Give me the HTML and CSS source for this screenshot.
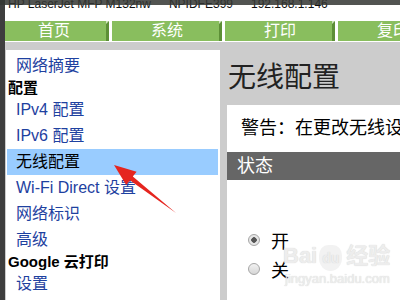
FILE: index.html
```html
<!DOCTYPE html>
<html lang="zh-CN">
<head>
<meta charset="utf-8">
<title>无线配置</title>
<link rel="stylesheet" href="styles.css">
</head>
<body>
<div class="page">
  <div class="frame-edge"></div>
  <div class="main">
    <div class="device">HP LaserJet MFP M132nw<span class="sep">NPIDFE399</span><span class="sep">192.168.1.146</span></div>
    <nav class="tabs">
      <a class="tab">首页</a>
      <a class="tab">系统</a>
      <a class="tab">打印</a>
      <a class="tab">复印</a>
    </nav>
    <div class="content">
      <aside class="sidenav">
        <a class="link">网络摘要</a>
        <div class="group">配置</div>
        <a class="link">IPv4 配置</a>
        <a class="link">IPv6 配置</a>
        <a class="link active">无线配置</a>
        <a class="link">Wi-Fi Direct 设置</a>
        <a class="link">网络标识</a>
        <a class="link">高级</a>
        <div class="group">Google 云打印</div>
        <a class="link">设置</a>
      </aside>
      <section class="panel">
        <h1 class="title">无线配置</h1>
        <div class="card">
          <p class="warn">警告：在更改无线设置之前，请确保已连接网络。</p>
          <div class="bar">状态</div>
          <div class="radios">
            <label class="opt"><input type="radio" name="st" checked><span>开</span></label>
            <label class="opt"><input type="radio" name="st"><span>关</span></label>
          </div>
          <div class="watermark"><div class="wm-logo">Bai<span class="paw">du</span>经验</div><div class="wm-url">jingyan.baidu.com</div></div>
        </div>
      </section>
    </div>
  </div>
  <div class="shade"></div>
  <svg class="arrow" width="400" height="300" viewBox="0 0 400 300">
    <polygon points="176,213 132.8,176.6 136.6,171.8 114,165 126.2,185 129.9,180.2" fill="#e5251f"/>
  </svg>
</div>
</body>
</html>
```
FILE: styles.css
```css
* { box-sizing: border-box; }
html, body { margin: 0; padding: 0; }
body {
  width: 400px;
  height: 300px;
  overflow: hidden;
  font-family: "Liberation Sans", "Noto Sans CJK SC", sans-serif;
  background: #ffffff;
}
.page {
  position: relative;
  display: flex;
  width: 400px;
  height: 300px;
  overflow: hidden;
}
.frame-edge {
  flex: 0 0 5px;
  background: #3e3e3e;
  z-index: 2;
}
.main {
  flex: 1;
  display: flex;
  flex-direction: column;
  overflow: hidden;
  min-width: 0;
}
.device {
  height: 21px;
  font-size: 12px;
  line-height: 14px;
  padding-left: 3px;
  margin-top: -3px;
  color: #111;
  white-space: nowrap;
  flex: 0 0 auto;
}
.device { height: 24px; }
.sep { margin-left: 18px; }
.tabs {
  display: flex;
  gap: 3px;
  margin-left: -6px;
  height: 20px;
  margin-bottom: 1px;
  flex: 0 0 auto;
}
.tab {
  position: relative;
  flex: 0 0 110px;
  height: 20px;
  background: #89be5e;
  border-right: 3px solid #5d8f37;
  color: #ffffff;
  font-size: 16px;
  line-height: 20px;
  text-align: center;
  padding-left: 3px;
}
.tab::after {
  content: "";
  position: absolute;
  top: 0;
  right: -3px;
  width: 0;
  height: 0;
  border-top: 3px solid #cfe3bd;
  border-right: 3px solid transparent;
}
.content {
  flex: 1;
  display: grid;
  grid-template-columns: 214px 1fr;
  column-gap: 7px;
  background: #cccccc;
  padding: 8px 0 0 1px;
  min-height: 0;
}
.sidenav {
  background: #ffffff;
  padding-top: 3px;
  display: flex;
  flex-direction: column;
}
.link {
  display: block;
  height: 26px;
  line-height: 26px;
  margin: 0 2px 0 1px;
  padding-left: 9px;
  font-size: 16px;
  color: #1e41a0;
  white-space: nowrap;
}
.link.active {
  background: #99ccff;
  color: #000000;
}
.group {
  height: 18px;
  line-height: 18px;
  padding-left: 2px;
  font-size: 15px;
  font-weight: bold;
  color: #000000;
  white-space: nowrap;
}
.panel {
  display: flex;
  flex-direction: column;
  min-width: 0;
}
.title {
  margin: 0;
  height: 55px;
  line-height: 55px;
  padding-left: 1px;
  font-size: 28px;
  font-weight: normal;
  color: #222222;
  white-space: nowrap;
}
.card {
  position: relative;
  flex: 1;
  background: #ffffff;
  overflow: hidden;
}
.warn {
  margin: 0;
  height: 47px;
  line-height: 47px;
  padding-left: 14px;
  font-size: 18px;
  color: #000000;
  white-space: nowrap;
}
.bar {
  height: 28px;
  line-height: 28px;
  background: #666666;
  color: #ffffff;
  font-size: 18px;
  padding-left: 10px;
}
.radios {
  padding: 45px 0 0 21px;
  display: flex;
  flex-direction: column;
}
.opt {
  display: flex;
  align-items: center;
  height: 29px;
  font-size: 18px;
  color: #000000;
}
.opt input {
  appearance: none;
  -webkit-appearance: none;
  margin: 0 11px 0 0;
  width: 12px;
  height: 12px;
  border-radius: 50%;
  border: 1px solid #a6a6a6;
  background: linear-gradient(#f2f2f2, #d6d6d6);
}
.opt input:checked {
  background: radial-gradient(circle, #555555 0 2.5px, #e6e6e6 3px);
}
.watermark {
  position: absolute;
  left: 56px;
  top: 138px;
  color: #ececec;
  text-shadow: 0 0 1px #c8c8c8;
  opacity: 0.9;
}
.wm-logo {
  font-size: 22px;
  font-weight: bold;
  line-height: 26px;
  white-space: nowrap;
}
.paw {
  display: inline-block;
  font-size: 14px;
  background: #f1f1f1;
  border-radius: 40% 40% 50% 50%;
  padding: 0 3px;
  margin: 0 4px 0 2px;
}
.wm-url {
  font-size: 13px;
  line-height: 16px;
  padding-left: 2px;
}
.shade {
  position: absolute;
  left: 0;
  top: 0;
  width: 400px;
  height: 5px;
  background: rgba(52, 54, 50, 0.85);
  z-index: 3;
}
.arrow {
  position: absolute;
  left: 0;
  top: 0;
  z-index: 4;
  pointer-events: none;
}
```
